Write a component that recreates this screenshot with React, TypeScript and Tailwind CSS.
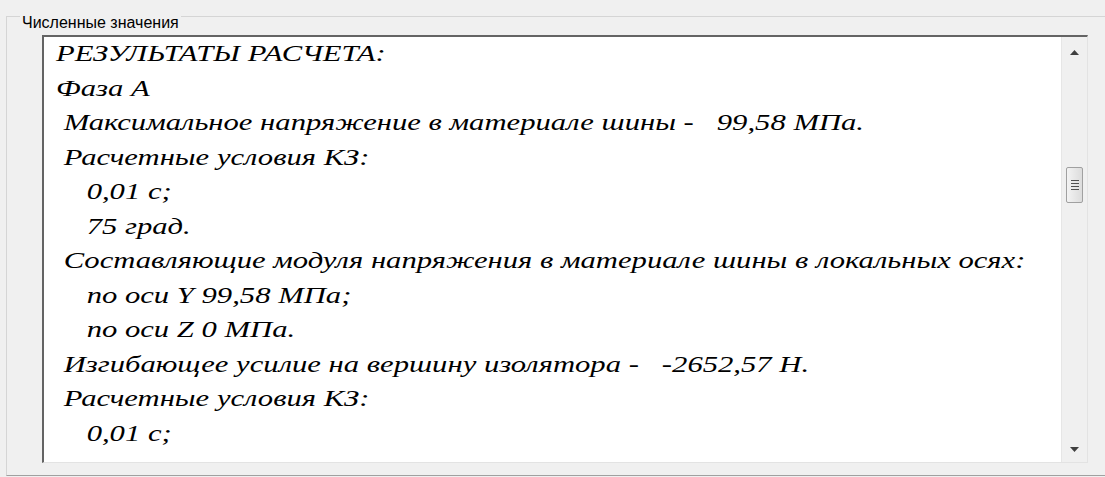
const lines = [
  "РЕЗУЛЬТАТЫ РАСЧЕТА:",
  "Фаза А",
  " Максимальное напряжение в материале шины -   99,58 МПа.",
  " Расчетные условия КЗ:",
  "    0,01 с;",
  "    75 град.",
  " Составляющие модуля напряжения в материале шины в локальных осях:",
  "    по оси Y 99,58 МПа;",
  "    по оси Z 0 МПа.",
  " Изгибающее усилие на вершину изолятора -   -2652,57 Н.",
  " Расчетные условия КЗ:",
  "    0,01 с;",
];

function ScrollBar() {
  return (
    <div className="w-[26px] bg-[#f0f0f0] border-l border-[#e6e6e6] flex flex-col items-center">
      <svg width="9" height="5" viewBox="0 0 9 5" className="mt-[13px]">
        <path d="M4.5 0 L9 5 L0 5 Z" fill="#404040" />
      </svg>
      <div className="mt-[112px] w-[17px] h-[36px] border border-[#a0a0a0] rounded-[2px] bg-linear-to-r from-[#f3f3f3] to-[#dcdcdc] flex flex-col items-center justify-center gap-[2px]">
        <div className="w-[8px] h-[1px] bg-[#505050]" />
        <div className="w-[8px] h-[1px] bg-[#505050]" />
        <div className="w-[8px] h-[1px] bg-[#505050]" />
        <div className="w-[8px] h-[1px] bg-[#505050]" />
      </div>
      <div className="flex-1" />
      <svg width="9" height="5" viewBox="0 0 9 5" className="mb-[10px]">
        <path d="M0 0 L9 0 L4.5 5 Z" fill="#404040" />
      </svg>
    </div>
  );
}

export default function App() {
  return (
    <div className="w-[1105px] h-[477px] bg-[#f0f0f0] pt-[16px] overflow-hidden">
      {/* group box */}
      <div className="relative h-[460px] border-t border-b border-l border-t-[#d5d5d5] border-b-[#a0a0a0] border-l-[#d5d5d5] ml-[6px] pl-[35px] pt-[18px]">
        <span className="absolute left-[13px] -top-[7px] px-[2px] bg-[#f0f0f0]">
          <span className="font-['Liberation_Sans',sans-serif]">
            <span className="text-[16px] leading-[18px] text-black">Численные значения</span>
          </span>
        </span>
        {/* text box */}
        <div className="flex w-[1046px] h-[428px] bg-white border-t-2 border-l-2 border-t-[#646464] border-l-[#646464] border-r border-b border-r-[#e3e3e3] border-b-[#e3e3e3]">
          <div className="flex-1 overflow-hidden pl-[12px]">
            <div className="font-['Liberation_Serif',serif]">
              {/* the rich edit draws its font wide, so stretch the lines sideways */}
              <div className="-mt-[1px] origin-top-left scale-x-[1.31] italic text-[23.4px] leading-[34.5px] text-black whitespace-pre">
                {lines.map((l, i) => (
                  <div key={i}>{l}</div>
                ))}
              </div>
            </div>
          </div>
          <ScrollBar />
        </div>
      </div>
    </div>
  );
}
